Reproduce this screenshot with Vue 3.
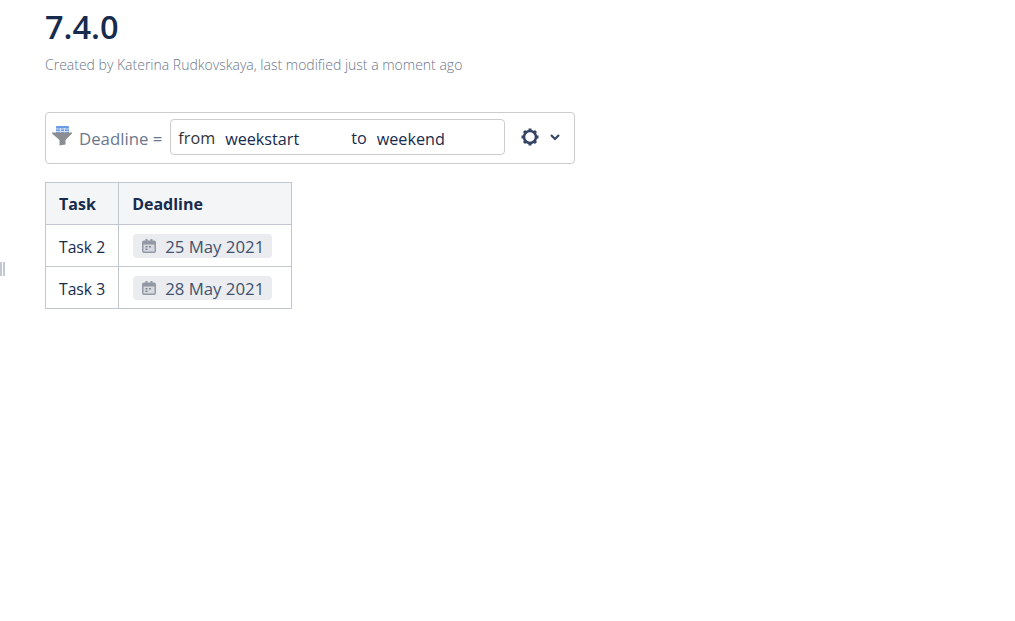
<template>
  <div class="page">
    <div class="grip"><i></i><i></i></div>
    <h1 class="title">7.4.0</h1>
    <p class="meta">Created by Katerina Rudkovskaya, last modified just a moment ago</p>

    <div class="filter-bar">
      <svg class="funnel" width="21" height="20" viewBox="0 0 21 20">
        <rect x="4" y="0" width="13" height="8" rx="1" fill="#6a9be6" />
        <path d="M4 3h13M4 5.500h13M8.500 2v6M12.500 2v6" stroke="#d3e2f8" stroke-width="1" />
        <path d="M0 6.500h20v1l-6.500 6.500v4.500l-6 1V14L0 7.500z" fill="#8b8f93" />
      </svg>
      <label class="filter-label">Deadline =</label>
      <div class="filter-input">
        <span class="from">from</span>
        <span class="value start">weekstart</span>
        <span class="to">to</span>
        <span class="value">weekend</span>
      </div>
      <button class="gear-button" type="button">
        <svg width="18" height="18" viewBox="0 0 18 18">
          <circle cx="9" cy="9" r="6" fill="none" stroke="#344563" stroke-width="2.500" />
          <rect v-for="angle in teeth" :key="angle" x="7.500" y="0.500" width="3" height="2.500" fill="#344563" :transform="`rotate(${angle} 9 9)`" />
        </svg>
        <svg width="10" height="7" viewBox="0 0 10 7">
          <path d="M1 1l4 4 4-4" fill="none" stroke="#344563" stroke-width="2.200" />
        </svg>
      </button>
    </div>

    <table class="tasks">
      <thead>
        <tr>
          <th class="col-task">Task</th>
          <th>Deadline</th>
        </tr>
      </thead>
      <tbody>
        <tr v-for="row in rows" :key="row.task">
          <td class="task-cell">{{ row.task }}</td>
          <td>
            <span class="date">
              <svg width="16" height="16" viewBox="0 0 16 16">
                <path fill="#9298a5" d="M3 2.500h1.500V1h2v1.500h3V1h2v1.500H13a2 2 0 0 1 2 2V13a2 2 0 0 1-2 2H3a2 2 0 0 1-2-2V4.500a2 2 0 0 1 2-2z" />
                <rect x="2.500" y="6.500" width="11" height="7" fill="#d5d8de" />
                <path fill="#7f8695" d="M4.500 8h2v1.500h-2zM8 8h2v1.500H8zM4.500 10.500h2V12h-2z" />
              </svg>
              {{ row.deadline }}
            </span>
          </td>
        </tr>
      </tbody>
    </table>
  </div>
</template>

<script setup>
const rows = [
  { task: "Task 2", deadline: "25 May 2021" },
  { task: "Task 3", deadline: "28 May 2021" },
];
const teeth = [0, 45, 90, 135, 180, 225, 270, 315];
</script>

<style>
html,
body {
  margin: 0;
  background: #fff;
}
</style>

<style scoped>
.page {
  position: relative;
  height: 621px;
  padding: 8px 0 0 45px;
  box-sizing: border-box;
  overflow: hidden;
  font-family: "Open Sans", "Noto Sans", sans-serif;
  color: #172b4d;
}

.grip {
  position: absolute;
  left: 0;
  top: 262px;
  display: flex;
  gap: 1px;
}

.grip i {
  width: 2px;
  height: 14px;
  background: #c3c7cf;
}

.title {
  margin: 0;
  font-size: 32.500px;
  line-height: 38px;
  font-weight: 600;
  color: #172b4d;
}

.meta {
  margin: 9px 0 0;
  font-size: 14px;
  line-height: 20px;
  font-weight: 300;
  color: #6b778c;
}

.filter-bar {
  display: flex;
  align-items: center;
  box-sizing: border-box;
  width: 530px;
  height: 52px;
  margin-top: 37px;
  padding: 0 6px;
  border: 1px solid #ccc;
  border-radius: 4px;
}

.funnel {
  flex: none;
  margin-top: -5px;
}

.filter-label {
  margin: 0 0 0 6px;
  font-size: 16.800px;
  color: #6b778c;
  white-space: nowrap;
}

.filter-input {
  display: flex;
  align-items: center;
  flex: none;
  box-sizing: border-box;
  width: 335px;
  height: 36px;
  margin: -2px 0 0 8px;
  padding: 3px 8px 0;
  border: 1px solid #ccc;
  border-radius: 4px;
  font-size: 16.200px;
}

.from {
  color: #333;
  margin-top: -2px;
  margin-left: -1px;
}

.value {
  margin-left: 10px;
}

.start {
  width: 126px;
}

.to {
  margin-top: -2px;
}

.gear-button {
  display: flex;
  align-items: center;
  gap: 11px;
  margin: -2px 0 0 16px;
  padding: 0;
  border: 0;
  background: transparent;
}

.tasks {
  margin-top: 18px;
  border-collapse: collapse;
  font-size: 16px;
}

.tasks th,
.tasks td {
  height: 42px;
  box-sizing: border-box;
  padding: 0 13px;
  border: 1px solid #c1c7d0;
  text-align: left;
  white-space: nowrap;
}

.tasks th {
  background: #f4f5f7;
  font-weight: 700;
}

.tasks td {
  padding: 2px 19px 0 14px;
  color: #172b4d;
}

.tasks td.task-cell {
  padding: 2px 13px 0;
  font-size: 15.700px;
}

.date {
  display: inline-flex;
  align-items: center;
  gap: 8px;
  height: 24px;
  padding: 0 8px;
  border-radius: 4px;
  background: #ebecf0;
  color: #42526e;
  font-size: 16.800px;
}
</style>
